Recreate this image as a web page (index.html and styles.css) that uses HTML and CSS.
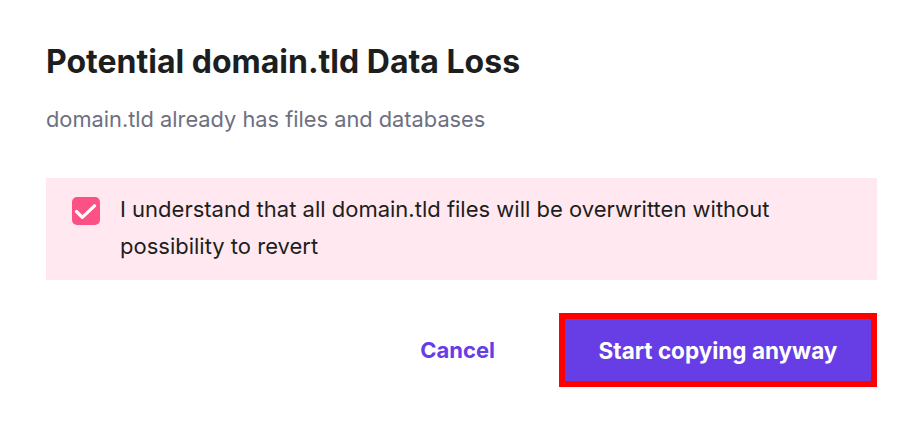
FILE: index.html
```html
<!DOCTYPE html>
<html lang="en">
<head>
<meta charset="utf-8">
<title>Potential Data Loss</title>
<link rel="stylesheet" href="styles.css">
</head>
<body>
<div class="dialog">
  <h1 class="title">Potential domain.tld Data Loss</h1>
  <p class="subtitle">domain.tld already has files and databases</p>
  <label class="warning">
    <span class="checkbox">
      <svg width="28" height="28" viewBox="0 0 28 28"><path d="M4.5 14.5 L10.3 20.3 L22.5 8.8" fill="none" stroke="#fff" stroke-width="3.2" stroke-linecap="round" stroke-linejoin="round"/></svg>
    </span>
    <span class="warning-text">I understand that all domain.tld files will be overwritten without possibility to revert</span>
  </label>
  <div class="actions">
    <button class="btn-cancel">Cancel</button>
    <button class="btn-primary">Start copying anyway</button>
  </div>
</div>
</body>
</html>
```

FILE: styles.css
```css
* { box-sizing: border-box; }
html, body {
  margin: 0;
  background: #ffffff;
}
body {
  font-family: "Inter", "Noto Sans", sans-serif;
  color: #1d1e20;
}
.dialog {
  width: 877px;
  padding: 44px 0 0 46px;
  display: flex;
  flex-direction: column;
}
.title {
  margin: 0;
  font-size: 32px;
  line-height: 36px;
  font-weight: 700;
  color: #1d1e20;
}
.subtitle {
  margin: 24px 0 0;
  font-size: 21.8px;
  line-height: 30px;
  color: #6d7081;
}
.warning {
  margin-top: 44px;
  background: #ffe8ef;
  display: flex;
  align-items: flex-start;
  gap: 20px;
  padding: 18px 26px 14px 26px;
  min-height: 102px;
}
.checkbox {
  flex: none;
  width: 28px;
  height: 28px;
  border-radius: 5px;
  background: #fc5185;
  margin-top: 1px;
  display: flex;
}
.warning-text {
  max-width: 700px;
  font-size: 22px;
  line-height: 37px;
  margin-top: -5px;
  color: #1d1e20;
}
.actions {
  margin-top: 33px;
  display: flex;
  justify-content: flex-end;
  align-items: center;
  gap: 64px;
}
.btn-cancel {
  border: none;
  background: none;
  padding: 0;
  font-family: inherit;
  font-size: 22px;
  font-weight: 700;
  color: #673de6;
}
.btn-primary {
  width: 318px;
  height: 74px;
  border: 6px solid #ff0000;
  background: #673de6;
  color: #ffffff;
  font-family: inherit;
  font-size: 22.5px;
  font-weight: 700;
  padding: 0;
}
```
